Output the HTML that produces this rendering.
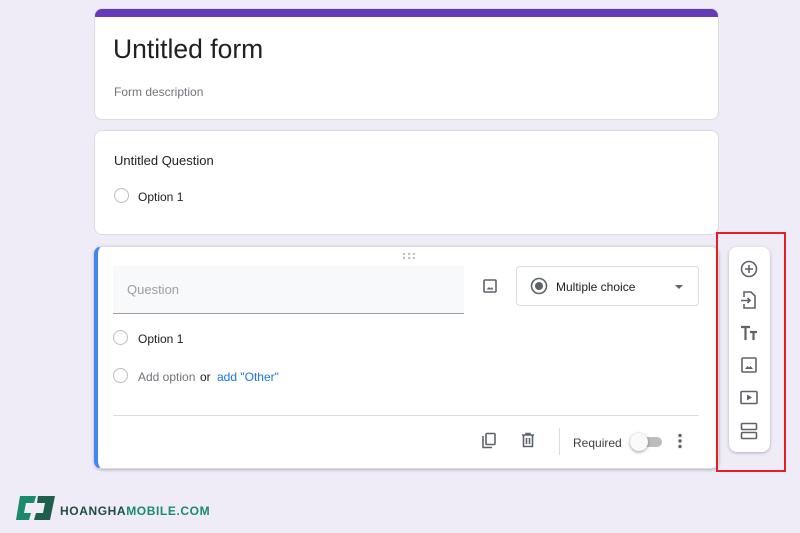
<!DOCTYPE html>
<html><head><meta charset="utf-8"><style>
*{box-sizing:border-box;margin:0;padding:0}
body{width:800px;height:533px;background:#efebf7;font-family:"Liberation Sans",Arial,sans-serif;position:relative;overflow:hidden;color:#202124}
.card{position:absolute;background:#fff;border-radius:8px;border:1px solid #dadce0}
.abs{position:absolute}
.radio{position:absolute;width:15px;height:15px;border:1.5px solid #bdbdbd;border-radius:50%}
svg{position:absolute}
</style></head><body>

<div class="card" style="left:94px;top:8px;width:625px;height:112px;overflow:hidden">
  <div class="abs" style="left:0;top:0;width:100%;height:8px;background:#673ab7"></div>
  <div class="abs" style="left:18px;top:25px;font-size:26.5px;color:#202124">Untitled form</div>
  <div class="abs" style="left:19px;top:76px;font-size:12px;color:#70757a">Form description</div>
</div>

<div class="card" style="left:94px;top:130px;width:625px;height:105px">
  <div class="abs" style="left:19px;top:22px;font-size:13px">Untitled Question</div>
  <div class="radio" style="left:19px;top:57px"></div>
  <div class="abs" style="left:43px;top:59px;font-size:12px">Option 1</div>
</div>

<div class="card" style="left:94px;top:246px;width:625px;height:223px;border-left:4px solid #4285f4;box-shadow:0 1px 3px rgba(0,0,0,.25)">
  <svg style="left:304px;top:5px" width="14" height="8"><g fill="#bdbdbd"><circle cx="2" cy="2" r="1.2"/><circle cx="7" cy="2" r="1.2"/><circle cx="12" cy="2" r="1.2"/><circle cx="2" cy="6" r="1.2"/><circle cx="7" cy="6" r="1.2"/><circle cx="12" cy="6" r="1.2"/></g></svg>
  <div class="abs" style="left:15px;top:19px;width:351px;height:48px;background:#f8f9fa;border-bottom:1.5px solid #9e9e9e"></div>
  <div class="abs" style="left:29px;top:35px;font-size:13px;color:#9aa0a6">Question</div>
  <svg style="left:385px;top:32px" width="14" height="14" viewBox="0 0 14 14"><rect x="1" y="1" width="12" height="12" rx="1" fill="none" stroke="#5f6368" stroke-width="1.6"/><path d="M3.5 10.5 L6 8 L7.5 9.5 L9 8 L10.5 10.5Z" fill="#5f6368"/></svg>
  <div class="abs" style="left:418px;top:19px;width:183px;height:40px;border:1px solid #dadce0;border-radius:4px"></div>
  <svg style="left:432px;top:30px" width="18" height="18"><circle cx="9" cy="9" r="7.5" fill="none" stroke="#5f6368" stroke-width="1.6"/><circle cx="9" cy="9" r="4" fill="#5f6368"/></svg>
  <div class="abs" style="left:458px;top:33px;font-size:12px">Multiple choice</div>
  <svg style="left:576px;top:37px" width="10" height="6"><path d="M1 1 L9 1 L5 5Z" fill="#5f6368"/></svg>
  <div class="radio" style="left:15px;top:83px"></div>
  <div class="abs" style="left:40px;top:85px;font-size:12px">Option 1</div>
  <div class="radio" style="left:15px;top:121px"></div>
  <div class="abs" style="left:40px;top:123px;font-size:12px;color:#70757a">Add option</div>
  <div class="abs" style="left:102px;top:123px;font-size:12px">or</div>
  <div class="abs" style="left:119px;top:123px;font-size:12px;color:#1a73e8">add "Other"</div>
  <div class="abs" style="left:15px;top:168px;width:586px;height:1px;background:#dadce0"></div>
  <svg style="left:383px;top:185px" width="16" height="18"><rect x="5" y="1.5" width="9" height="11" rx="1" fill="none" stroke="#5f6368" stroke-width="1.6"/><path d="M2 4 V15.5 H11" fill="none" stroke="#5f6368" stroke-width="1.6"/></svg>
  <svg style="left:423px;top:185px" width="14" height="16"><path d="M1 3 H13 M5 3 V1.5 H9 V3 M2.5 3 V14.5 H11.5 V3 M5.5 6 V12 M8.5 6 V12" fill="none" stroke="#5f6368" stroke-width="1.6"/></svg>
  <div class="abs" style="left:461px;top:181px;width:1px;height:27px;background:#dadce0"></div>
  <div class="abs" style="left:475px;top:189px;font-size:12px;color:#3c4043">Required</div>
  <div class="abs" style="left:540px;top:190px;width:24px;height:10px;border-radius:5px;background:#bdbdbd"></div>
  <div class="abs" style="left:532px;top:186px;width:18px;height:18px;border-radius:50%;background:#fafafa;box-shadow:0 1px 3px rgba(0,0,0,.4)"></div>
  <svg style="left:579px;top:186px" width="6" height="16"><g fill="#5f6368"><circle cx="3" cy="2.5" r="1.7"/><circle cx="3" cy="8" r="1.7"/><circle cx="3" cy="13.5" r="1.7"/></g></svg>
</div>

<div class="abs" style="left:716px;top:232px;width:70px;height:240px;border:2.5px solid #e31e24"></div>
<div class="abs" style="left:729px;top:247px;width:41px;height:205px;background:#fff;border-radius:8px;box-shadow:0 1px 3px rgba(0,0,0,.25)"></div>
<svg style="left:739px;top:259px" width="20" height="20"><circle cx="10" cy="10" r="7.5" fill="none" stroke="#5f6368" stroke-width="1.6"/><path d="M10 6 V14 M6 10 H14" stroke="#5f6368" stroke-width="1.6"/></svg>
<svg style="left:739px;top:290px" width="20" height="20"><path d="M5 7 V2 H12 L16 6 V18 H5 V14" fill="none" stroke="#5f6368" stroke-width="1.6"/><path d="M2 10.5 H11 M8.5 8 L11 10.5 L8.5 13" fill="none" stroke="#5f6368" stroke-width="1.6"/></svg>
<svg style="left:739px;top:323px" width="20" height="20"><path d="M2 4 H11 M6.5 4 V17 M11 9 H18 M14.5 9 V17" stroke="#5f6368" stroke-width="2.2"/></svg>
<svg style="left:741px;top:357px" width="16" height="16"><rect x="1" y="1" width="14" height="14" rx="1" fill="none" stroke="#5f6368" stroke-width="1.6"/><path d="M4 12 L6.5 9 L8 10.5 L9.5 9 L12 12Z" fill="#5f6368"/></svg>
<svg style="left:740px;top:390px" width="18" height="15"><rect x="1" y="1.5" width="16" height="12" rx="1" fill="none" stroke="#5f6368" stroke-width="1.6"/><path d="M7 4.5 L12 7.5 L7 10.5Z" fill="#5f6368"/></svg>
<svg style="left:740px;top:422px" width="18" height="18"><rect x="1.5" y="1.5" width="15" height="6" rx="1" fill="none" stroke="#5f6368" stroke-width="1.6"/><rect x="1.5" y="10.5" width="15" height="6" rx="1" fill="none" stroke="#5f6368" stroke-width="1.6"/></svg>

<svg style="left:14px;top:494px" width="44" height="28" viewBox="0 0 44 28"><path d="M6 2 H22 L20 9 H12 L10 19 H17 L15 26 H2 Z" fill="#1a8a6b"/><path d="M24 2 H41 L36 26 H20 L22 19 H29 L31 9 H23Z" fill="#1e5e4c"/></svg>
<div class="abs" style="left:60px;top:504px;font-size:12px;font-weight:bold;letter-spacing:0.6px;color:#1f4d40">HOANGHA<span style="color:#1a8a6b">MOBILE.COM</span></div>
</body></html>
